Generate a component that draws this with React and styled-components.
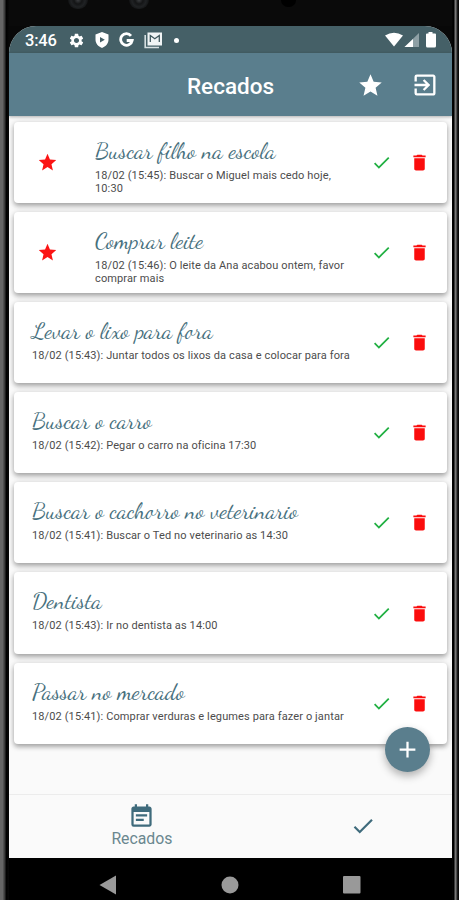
import React from 'react';
import styled, { createGlobalStyle } from 'styled-components';
import {
  MdAdd,
  MdCheck,
  MdDelete,
  MdEventNote,
  MdExitToApp,
  MdSettings,
  MdStar,
} from 'react-icons/md';

const messages = [
  { title: 'Buscar filho na escola', text: '18/02 (15:45): Buscar o Miguel mais cedo hoje, 10:30', starred: true },
  { title: 'Comprar leite', text: '18/02 (15:46): O leite da Ana acabou ontem, favor comprar mais', starred: true },
  { title: 'Levar o lixo para fora', text: '18/02 (15:43): Juntar todos os lixos da casa e colocar para fora' },
  { title: 'Buscar o carro', text: '18/02 (15:42): Pegar o carro na oficina 17:30' },
  { title: 'Buscar o cachorro no veterinario', text: '18/02 (15:41): Buscar o Ted no veterinario as 14:30' },
  { title: 'Dentista', text: '18/02 (15:43): Ir no dentista as 14:00' },
  { title: 'Passar no mercado', text: '18/02 (15:41): Comprar verduras e legumes para fazer o jantar' },
];

const ShieldIcon = () => (
  <svg width="14" height="16" viewBox="0 0 14 16">
    <path fill="#fff" fillRule="evenodd" d="M7 0l6.500 2.500v5c0 4-2.700 7-6.500 8.500C3.200 14.500.5 11.500.5 7.500v-5zM5 5v5.600l4.800-2.800z" />
  </svg>
);

const GoogleIcon = () => (
  <svg width="15" height="16" viewBox="0 0 15 16">
    <path fill="none" stroke="#fff" strokeWidth="2.800" d="M12 3.800A5.800 5.800 0 1 0 13.200 8.500H7.700" />
  </svg>
);

const MailIcon = () => (
  <svg width="19" height="17" viewBox="0 0 19 17">
    <path fill="none" stroke="#d5dfe1" strokeWidth="1.600" d="M1.200 3v12.500H15" />
    <path fill="#f0f4f5" d="M3.500.5H18v13H3.500z" />
    <path fill="none" stroke="#41595f" strokeWidth="1.300" d="M6.300 10V3.500l4.500 3.300 4.500-3.300V10" />
  </svg>
);

const SignalIcons = () => (
  <svg width="54" height="17" viewBox="0 0 54 17">
    <path fill="#fff" d="M1 3.500Q10 -2 19 3.500L10 14.500z" />
    <path fill="#8ea0a5" d="M35 1v14H20.500z" />
    <path fill="#fff" d="M29 7v8h-8.500z" />
    <path fill="#fff" d="M44.500 0h4v1.500H51q1 0 1 1V14q0 1.500-1.500 1.500h-7Q42 15.500 42 14V2.500q0-1 1-1h1.500z" />
  </svg>
);

const MessageItem = ({ title, text, starred }) => (
  <Card>
    {starred && (
      <StarBox>
        <MdStar size={21} />
      </StarBox>
    )}
    <CardContent>
      <Title>{title}</Title>
      <Text>{text}</Text>
    </CardContent>
    <Actions>
      <IconButton $color="#22b043" aria-label="Concluir">
        <MdCheck size={21} />
      </IconButton>
      <IconButton $color="#fb0d0d" aria-label="Excluir">
        <MdDelete size={21} />
      </IconButton>
    </Actions>
  </Card>
);

const App = () => (
  <>
    <GlobalStyle />
    <Phone>
      <Bezel>
        <Lens />
        <Lens />
        <Sensor />
      </Bezel>
      <Screen>
        <StatusBar>
          <Clock>3:46</Clock>
          <MdSettings size={17} />
          <ShieldIcon />
          <GoogleIcon />
          <MailIcon />
          <Dot />
          <StatusRight>
            <SignalIcons />
          </StatusRight>
        </StatusBar>
        <Header>
          <HeaderTitle>Recados</HeaderTitle>
          <HeaderActions>
            <MdStar size={27} />
            <MdExitToApp size={28} />
          </HeaderActions>
        </Header>
        <List>
          {messages.map((message) => (
            <MessageItem key={message.title} {...message} />
          ))}
        </List>
        <AddButton aria-label="Adicionar">
          <MdAdd size={27} />
        </AddButton>
        <Tabs>
          <Tab $grow={3}>
            <MdEventNote size={27} />
            <TabLabel>Recados</TabLabel>
          </Tab>
          <Tab $grow={2}>
            <MdCheck size={26} />
          </Tab>
        </Tabs>
      </Screen>
      <SystemBar>
        <svg width="18" height="20" viewBox="0 0 18 20">
          <path fill="#999" d="M17 .500v19L.500 10z" />
        </svg>
        <svg width="18" height="18" viewBox="0 0 18 18">
          <circle cx="9" cy="9" r="8.500" fill="#999" />
        </svg>
        <svg width="18" height="18" viewBox="0 0 18 18">
          <rect width="17.500" height="17.500" rx="1" fill="#999" />
        </svg>
      </SystemBar>
    </Phone>
  </>
);

export default App;

const GlobalStyle = createGlobalStyle`
  * {
    box-sizing: border-box;
  }

  body {
    margin: 0;
    background: #000;
    font-family: Roboto, sans-serif;
  }

  svg {
    display: block;
    flex-shrink: 0;
  }
`;

const Phone = styled.div`
  width: 459px;
  height: 900px;
  padding: 0 7px 0 9px;
  overflow: hidden;
  display: flex;
  flex-direction: column;
  background: linear-gradient(90deg, #666 0, #666 3px, #3c3c3c 4px, #3c3c3c 5px, #000 6px, #080808 9px, #080808 452px, #000 453px, #000 454px, #777 455px, #777 456px, #222 457px, #000 459px);
`;

const Bezel = styled.div`
  height: 26px;
  flex-shrink: 0;
  display: flex;
  align-items: flex-start;
  padding-left: 59px;
  gap: 41px;
  background: #0a0a0a;
`;

const Lens = styled.div`
  width: 20px;
  height: 9px;
  border-radius: 0 0 10px 10px;
  background: radial-gradient(circle at 50% 0, #3a3c3f 0, #141516 4px, #202224 7px, #121314 10px);
`;

const Sensor = styled.div`
  width: 15px;
  height: 7px;
  margin-left: 91px;
  border-radius: 0 0 8px 8px;
  background: #000;
`;

const Screen = styled.div`
  position: relative;
  height: 832px;
  flex-shrink: 0;
  display: flex;
  flex-direction: column;
  border-radius: 27px 27px 0 0;
  overflow: hidden;
  background: #fafafa;
`;

const StatusBar = styled.div`
  height: 27px;
  flex-shrink: 0;
  display: flex;
  align-items: center;
  gap: 10px;
  padding: 1px 14px 0 16px;
  color: #fff;
  background: #456067;
`;

const Clock = styled.span`
  width: 33px;
  margin-top: 2px;
  font-size: 16.500px;
  font-weight: 500;
  line-height: 20px;
  letter-spacing: -0.2px;
`;

const Dot = styled.span`
  width: 5px;
  height: 5px;
  margin-left: 1px;
  border-radius: 50%;
  background: #fff;
`;

const StatusRight = styled.div`
  margin-left: auto;
`;

const Header = styled.header`
  height: 63px;
  flex-shrink: 0;
  display: grid;
  grid-template-columns: 1fr auto 1fr;
  align-items: center;
  padding: 1px 13px 0;
  color: #fff;
  background: #5a7e8d;
  box-shadow: 0 1px 3px rgba(0, 0, 0, 0.3);
  z-index: 1;
`;

const HeaderTitle = styled.h1`
  grid-column: 2;
  margin: 1px 0 0;
  font-size: 22.500px;
  font-weight: 500;
  line-height: 28px;
`;

const HeaderActions = styled.div`
  display: flex;
  justify-content: flex-end;
  align-items: center;
  gap: 27px;
`;

const List = styled.div`
  flex: 1;
  display: flex;
  flex-direction: column;
  gap: 9px;
  padding: 5.500px 5px 0;
`;

const Card = styled.article`
  height: 81.200px;
  flex-shrink: 0;
  display: flex;
  border-radius: 4px;
  background: #fff;
  box-shadow: 0 3px 5px rgba(0, 0, 0, 0.3), 0 0 6px rgba(0, 0, 0, 0.12);
`;

const StarBox = styled.div`
  width: 63px;
  display: flex;
  align-items: center;
  padding-left: 23px;
  color: #fb1414;
`;

const CardContent = styled.div`
  flex: 1;
  min-width: 0;
  padding: 15px 0 0 18px;
`;

const Title = styled.h2`
  margin: 0;
  height: 32px;
  font-family: 'Dancing Script', cursive;
  font-size: 23px;
  font-weight: 400;
  line-height: 27px;
  white-space: nowrap;
  color: #47707d;
`;

const Text = styled.p`
  margin: 0;
  font-size: 11px;
  line-height: 13.500px;
  letter-spacing: 0.12px;
  color: #4c4c4c;
`;

const Actions = styled.div`
  width: 93px;
  display: flex;
  align-items: center;
  gap: 17px;
  padding-left: 17px;
`;

const IconButton = styled.button`
  padding: 0;
  border: 0;
  background: none;
  color: ${({ $color }) => $color};
`;

const AddButton = styled.button`
  position: absolute;
  right: 22px;
  bottom: 86px;
  width: 45px;
  height: 45px;
  display: flex;
  align-items: center;
  justify-content: center;
  padding: 0;
  border: 0;
  border-radius: 50%;
  color: #fff;
  background: #5a7e8d;
  box-shadow: 0 4px 8px rgba(0, 0, 0, 0.3);
`;

const Tabs = styled.nav`
  height: 64px;
  flex-shrink: 0;
  display: flex;
  padding-bottom: 2px;
  border-top: 1px solid #ececec;
  background: #fafafa;
`;

const Tab = styled.div`
  flex: ${({ $grow }) => $grow} 0 0;
  display: flex;
  flex-direction: column;
  align-items: center;
  justify-content: center;
  color: #3f6b7c;
`;

const TabLabel = styled.span`
  margin-top: -1px;
  font-size: 15.800px;
  line-height: 19px;
  color: #6a878f;
`;

const SystemBar = styled.div`
  flex: 1;
  display: flex;
  align-items: center;
  justify-content: space-between;
  padding: 11px 91px 0 90px;
  background: #000;
`;
